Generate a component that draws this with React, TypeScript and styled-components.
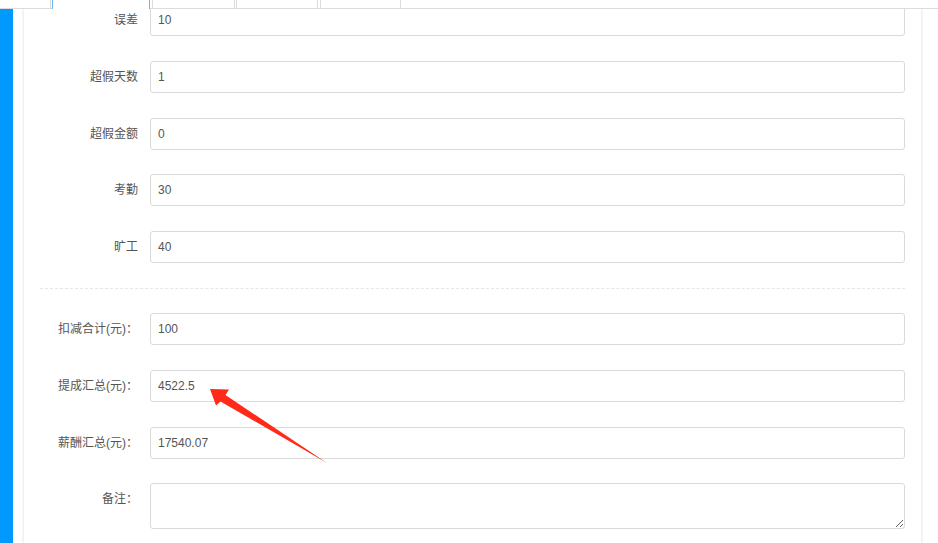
import React from "react";
import styled, { createGlobalStyle } from "styled-components";

const GlobalStyle = createGlobalStyle`
  html, body {
    margin: 0;
    padding: 0;
    background: #fff;
    overflow: hidden;
  }
  body {
    font-family: "Liberation Sans", "Noto Sans CJK SC", Arial, sans-serif;
    font-size: 12px;
    color: #555;
  }
  * { box-sizing: border-box; }
`;

const Page = styled.div`
  position: relative;
  width: 938px;
  height: 543px;
  overflow: hidden;
  display: flex;
  flex-direction: column;
`;

const TabBar = styled.div`
  position: relative;
  z-index: 2;
  flex: none;
  height: 9px;
  display: flex;
  align-items: flex-start;
  background: #fff;
  border-bottom: 1px solid #dcdcdc;
`;

const Tab = styled.div<{ $w: number; $ml: number; $active?: boolean; $noLeft?: boolean }>`
  flex: none;
  width: ${(p) => p.$w}px;
  margin-left: ${(p) => p.$ml}px;
  height: ${(p) => (p.$active ? 9 : 8)}px;
  background: #fff;
  border-left: 1px solid ${(p) => (p.$noLeft ? "transparent" : p.$active ? "#6fb6f2" : "#dcdcdc")};
  border-right: 1px solid ${(p) => (p.$active ? "#6fb6f2" : "#dcdcdc")};
`;

const Main = styled.div`
  flex: 1;
  display: flex;
  min-height: 0;
`;

const SideBar = styled.div`
  flex: none;
  width: 13px;
  background: #0099ff;
`;

const Panel = styled.div`
  flex: none;
  width: 897px;
  margin-left: 11px;
  background: #fff;
  box-shadow: 0 0 3px rgba(0, 0, 0, 0.16);
`;

const Form = styled.div`
  margin-top: -4.67px;
  padding: 0 16px;
  display: flex;
  flex-direction: column;
  gap: 24.67px;
`;

const Row = styled.div`
  display: grid;
  grid-template-columns: 98px 1fr;
  column-gap: 12px;
  align-items: start;
`;

const Label = styled.label`
  height: 32px;
  line-height: 32px;
  text-align: right;
  white-space: nowrap;
  font-size: 12px;
  color: #555;
  font-family: "Liberation Sans", "Noto Sans CJK SC", sans-serif;
`;

const Input = styled.input`
  display: block;
  width: 100%;
  height: 32px;
  margin: 0;
  padding: 0 7px;
  border: 1px solid #dadada;
  border-radius: 3px;
  background: #fff;
  font-family: "Liberation Sans", "Noto Sans CJK SC", sans-serif;
  font-size: 12px;
  color: #555;
  outline: none;
`;

const TextArea = styled.textarea`
  display: block;
  width: 100%;
  height: 46px;
  margin: 0;
  padding: 6px 7px;
  border: 1px solid #dadada;
  border-radius: 3px;
  background: #fff;
  font-family: "Liberation Sans", "Noto Sans CJK SC", sans-serif;
  font-size: 12px;
  color: #555;
  resize: vertical;
  outline: none;
`;

const Divider = styled.div`
  height: 1px;
  border-top: 1px dashed #e6e6e6;
`;

const ArrowLayer = styled.svg`
  position: absolute;
  left: 0;
  top: 0;
  pointer-events: none;
  z-index: 3;
`;

const topRows = [
  { label: "误差", value: "10" },
  { label: "超假天数", value: "1" },
  { label: "超假金额", value: "0" },
  { label: "考勤", value: "30" },
  { label: "旷工", value: "40" },
];

const bottomRows = [
  { label: "扣减合计(元)：", value: "100" },
  { label: "提成汇总(元)：", value: "4522.5" },
  { label: "薪酬汇总(元)：", value: "17540.07" },
];

const tabs = [
  { w: 51, ml: 0, noLeft: true },
  { w: 98, ml: 1, active: true },
  { w: 83, ml: 2 },
  { w: 82, ml: 1 },
  { w: 81, ml: 2 },
];

export default function App() {
  return (
    <>
      <GlobalStyle />
      <Page>
        <TabBar>
          {tabs.map((t, i) => (
            <Tab key={i} $w={t.w} $ml={t.ml} $active={t.active} $noLeft={t.noLeft} />
          ))}
        </TabBar>
        <Main>
          <SideBar />
          <Panel>
            <Form>
              {topRows.map((r) => (
                <Row key={r.label}>
                  <Label>{r.label}</Label>
                  <Input defaultValue={r.value} />
                </Row>
              ))}
              <Divider />
              {bottomRows.map((r) => (
                <Row key={r.label}>
                  <Label>{r.label}</Label>
                  <Input defaultValue={r.value} />
                </Row>
              ))}
              <Row>
                <Label>备注：</Label>
                <TextArea />
              </Row>
            </Form>
          </Panel>
        </Main>
        <ArrowLayer width="938" height="543" viewBox="0 0 938 543">
          <polygon
            points="210,389 229,389.5 225.5,395 327,463 220.5,401.5 216,405.5"
            fill="#ff2a1a"
          />
        </ArrowLayer>
      </Page>
    </>
  );
}
